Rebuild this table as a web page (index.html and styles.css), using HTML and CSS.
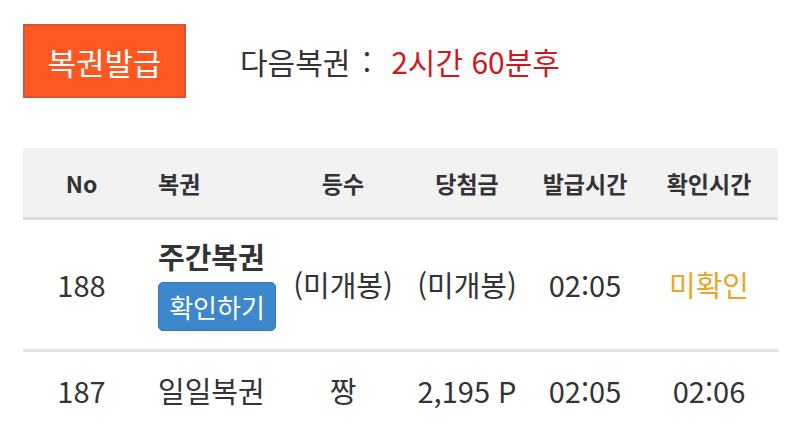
FILE: index.html
```html
<!DOCTYPE html>
<html lang="ko">
<head>
<meta charset="utf-8">
<link rel="stylesheet" href="styles.css">
</head>
<body>
<div class="page">
  <div class="top">
    <button class="issue">복권발급</button>
    <div class="next">다음복권 <span class="colon">:</span><span class="remain">2시간 60분후</span></div>
  </div>
  <div class="table">
    <div class="row head">
      <div class="c">No</div>
      <div class="c l">복권</div>
      <div class="c">등수</div>
      <div class="c">당첨금</div>
      <div class="c">발급시간</div>
      <div class="c">확인시간</div>
    </div>
    <div class="row r1">
      <div class="c">188</div>
      <div class="c l">
        <div class="name">주간복권</div>
        <button class="check">확인하기</button>
      </div>
      <div class="c">(미개봉)</div>
      <div class="c">(미개봉)</div>
      <div class="c">02:05</div>
      <div class="c pending">미확인</div>
    </div>
    <div class="row r2">
      <div class="c">187</div>
      <div class="c l">일일복권</div>
      <div class="c">짱</div>
      <div class="c">2,195 P</div>
      <div class="c">02:05</div>
      <div class="c">02:06</div>
    </div>
  </div>
</div>
</body>
</html>
```
FILE: styles.css
```css
* { box-sizing: border-box; }
html, body { margin: 0; padding: 0; background: #fff; }
body {
  font-family: "Noto Sans CJK KR", "Noto Sans", sans-serif;
  color: #333;
  overflow: hidden;
}
.page { padding: 24px 22px 0 23px; }
.top { display: flex; align-items: center; }
.issue {
  width: 163px;
  height: 74px;
  background: #ff5722;
  border: 2px solid #d4552f;
  color: #fff;
  font-family: inherit;
  font-size: 31px;
  padding: 0;
}
.next { margin-left: 54px; font-size: 30px; color: #333; }
.colon { margin-left: 4px; }
.remain { color: #d0191f; margin-left: 20px; }
.table { margin-top: 50px; width: 755px; }
.row {
  display: grid;
  grid-template-columns: 117px 142px 122px 126px 110px 138px;
  align-items: center;
}
.c { text-align: center; }
.c.l { text-align: left; padding-left: 18px; }
.head {
  background: #f2f2f2;
  height: 72px;
  border-bottom: 3px solid #dcdcdc;
  font-weight: bold;
  font-size: 23px;
  color: #333;
}
.r1, .r2 { font-size: 29px; }
.r1 { height: 132px; border-bottom: 3px solid #e2e2e2; }
.r2 { height: 76px; }
.name { font-weight: bold; font-size: 29px; line-height: 34px; }
.check {
  margin-top: 9px;
  width: 118px;
  height: 49px;
  background: #3d88cc;
  border: 1px solid #3278b8;
  border-radius: 5px;
  color: #fff;
  font-family: inherit;
  font-size: 26px;
  padding: 0;
}
.r1 .c:not(.l) { margin-top: -2px; }
.pending { color: #eaa623; }
```
